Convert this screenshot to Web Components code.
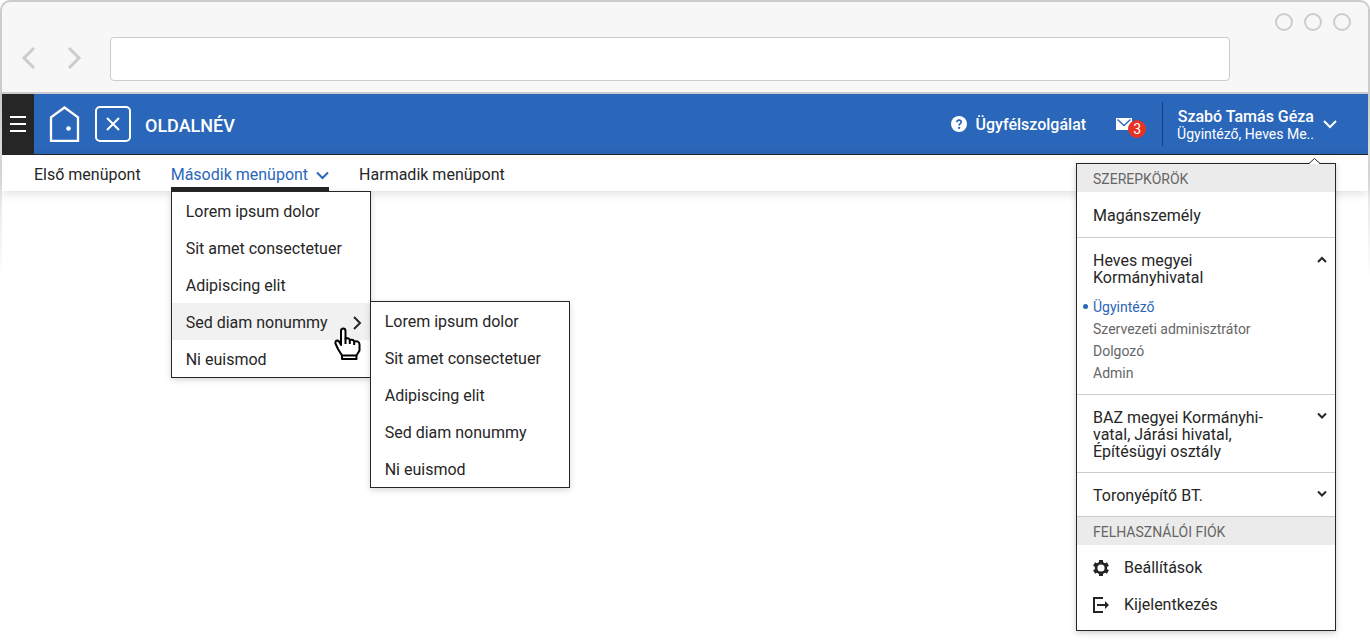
<!DOCTYPE html>
<html lang="hu">
<head>
<meta charset="utf-8">
<title>Oldalnév</title>
<style>
html, body { margin: 0; background: #fff; }
body { font: 16px/20px Roboto, "Liberation Sans", sans-serif; color: #262626; }
</style>
</head>
<body>
<browser-window>
  <app-header page-title="OLDALNÉV">
    <user-menu user-name="Szabó Tamás Géza" user-role="Ügyintéző, Heves Me.."></user-menu>
  </app-header>
  <nav-bar>
    <nav-item label="Első menüpont"></nav-item>
    <nav-item label="Második menüpont" open>
      <menu-list>
        <menu-entry label="Lorem ipsum dolor"></menu-entry>
        <menu-entry label="Sit amet consectetuer"></menu-entry>
        <menu-entry label="Adipiscing elit"></menu-entry>
        <menu-entry label="Sed diam nonummy" open>
          <menu-list>
            <menu-entry label="Lorem ipsum dolor"></menu-entry>
            <menu-entry label="Sit amet consectetuer"></menu-entry>
            <menu-entry label="Adipiscing elit"></menu-entry>
            <menu-entry label="Sed diam nonummy"></menu-entry>
            <menu-entry label="Ni euismod"></menu-entry>
          </menu-list>
        </menu-entry>
        <menu-entry label="Ni euismod"></menu-entry>
      </menu-list>
    </nav-item>
    <nav-item label="Harmadik menüpont"></nav-item>
  </nav-bar>
</browser-window>

<script>
const reset = `
  :host, *, *::before, *::after { box-sizing: border-box; }
  button { font: inherit; color: inherit; background: none; border: 0; padding: 0; margin: 0; cursor: pointer; text-align: left; }
  a { color: inherit; text-decoration: none; }
  svg { display: block; fill: none; flex: none; }
  ul { list-style: none; margin: 0; padding: 0; }
`;

class Base extends HTMLElement {
  constructor() {
    super();
    this.attachShadow({ mode: "open" });
  }
  connectedCallback() {
    this.shadowRoot.innerHTML = `<style>${reset}${this.styles()}</style>${this.markup()}`;
  }
  text(name) { return this.getAttribute(name) || ""; }
}

customElements.define("browser-window", class extends Base {
  styles() { return `
    :host { display: flex; flex-direction: column; min-height: 100vh; }
    .chrome { display: flex; flex-direction: column; height: 94px; background: #f7f7f7; border: 2px solid #ccc; border-radius: 10px 10px 0 0; border-bottom-color: #ccc; }
    .dots { display: flex; justify-content: flex-end; gap: 11px; padding: 11px 17px 0 0; }
    .dots i { width: 18px; height: 18px; border: 2px solid #ccc; border-radius: 50%; }
    .bar { display: flex; align-items: center; padding: 6px 138px 0 18px; }
    .bar button { padding-bottom: 2px; }
    .bar button + button { margin-left: 28px; }
    .bar input { flex: 1; min-width: 0; height: 44px; margin-left: 26px; border: 1px solid #ccc; border-radius: 4px; background: #fff; padding: 0 12px; font: inherit; }
    .page { flex: 1; padding: 0 2px; background: linear-gradient(#ccc, #fff) left top / 2px 186px no-repeat, linear-gradient(#ccc, #fff) right top / 2px 186px no-repeat; }
  `; }
  markup() { return `
    <div class="chrome">
      <div class="dots"><i></i><i></i><i></i></div>
      <div class="bar">
        <button aria-label="Vissza"><svg width="18" height="24" stroke="#ccc" stroke-width="3"><path d="M14 2 4 12l10 10"/></svg></button>
        <button aria-label="Előre"><svg width="18" height="24" stroke="#ccc" stroke-width="3"><path d="M3 2l10 10L3 22"/></svg></button>
        <input type="text" aria-label="Cím">
      </div>
    </div>
    <div class="page"><slot></slot></div>`; }
});

customElements.define("app-header", class extends Base {
  styles() { return `
    :host { display: flex; align-items: center; height: 61px; background: #2a66ba; border-bottom: 1px solid #262626; color: #fff; }
    .burger { display: grid; place-items: center; align-self: stretch; width: 32px; background: #262626; }
    .home { margin-left: 15px; }
    .close { display: grid; place-items: center; width: 36px; height: 36px; margin-left: 15px; border: 2px solid #fff; border-radius: 5px; }
    .title { margin: 4px 0 0 14px; font-size: 18px; line-height: 20px; font-weight: 500; }
    .help { display: flex; align-items: center; gap: 8px; margin-left: auto; font-weight: 500; }
    .help span { padding-top: 2px; }
    .mail { position: relative; margin-left: 30px; }
    .badge { position: absolute; left: 12px; top: 2px; width: 18px; height: 18px; border-radius: 50%; background: #e63323; font-size: 14px; line-height: 18px; text-align: center; }
    .rule { width: 1px; height: 44px; margin: 0 14px 0 30px; background: #0c4382; }
  `; }
  markup() { return `
    <button class="burger" aria-label="Menü"><svg width="16" height="16" stroke="#fff" stroke-width="2"><path d="M0 1h16M0 8h16M0 15h16"/></svg></button>
    <a class="home" href="#" aria-label="Kezdőlap"><svg width="31" height="36" stroke="#fff" stroke-width="2.300"><path d="M2 34.800V11.300L15.500 1.500 29 11.300V34.800z"/><circle cx="19.500" cy="22.500" r="2.300" fill="#fff" stroke="none"/></svg></a>
    <button class="close" aria-label="Bezárás"><svg width="14" height="14" stroke="#fff" stroke-width="2"><path d="M1 1l12 12M13 1 1 13"/></svg></button>
    <h1 class="title">${this.text("page-title")}</h1>
    <a class="help" href="#"><svg width="16" height="16"><circle cx="8" cy="8" r="8" fill="#fff"/><path d="M5.900 6.200C5.900 3.300 10.200 3.400 10.200 6c0 1.600-2.100 1.700-2.100 3.500" stroke="#2a66ba" stroke-width="1.700"/><circle cx="8.100" cy="11.900" r="1.100" fill="#2a66ba"/></svg><span>Ügyfélszolgálat</span></a>
    <a class="mail" href="#" aria-label="Üzenetek"><svg width="16" height="12"><path d="M0 0h16v12H0z" fill="#fff"/><path d="M1.500 1.500 8 7.500l6.500-6" stroke="#2a66ba" stroke-width="1.300"/></svg><span class="badge">3</span></a>
    <span class="rule"></span>
    <slot></slot>`; }
});

customElements.define("user-menu", class extends Base {
  styles() { return `
    :host { display: block; position: relative; margin-right: 30px; color: #fff; }
    .who { display: flex; align-items: center; gap: 8px; }
    .names { display: flex; flex-direction: column; align-items: flex-end; padding-top: 2px; }
    .name { font-weight: 500; line-height: 18px; }
    .role { font-size: 14px; line-height: 16px; }
    .panel { position: absolute; z-index: 3; right: 2px; top: 57px; width: 260px; background: #fff; color: #262626; border: 1px solid #262626; box-shadow: 0 2px 6px rgba(0,0,0,.2); }
    .tip { position: absolute; right: 14px; top: -7px; }
    h2 { margin: 0; padding: 1px 16px 0; height: 28px; background: #ebebeb; color: #666; font-size: 14px; line-height: 28px; font-weight: 400; }
    .section { border-bottom: 1px solid #ccc; padding: 14px 8px 12px 16px; line-height: 17px; }
    .section.single { padding: 15px 8px 13px 16px; }
    .toggle { display: flex; justify-content: space-between; align-items: flex-start; width: 100%; line-height: 17px; }
    .toggle span { width: 180px; }
    .toggle svg { margin-top: 3px; }
    .roles { display: grid; gap: 4px; margin-top: 12px; font-size: 14px; line-height: 18px; color: #666; }
    .roles li { position: relative; }
    .roles .current { color: #2a66ba; }
    .current::before { content: ""; position: absolute; left: -10px; top: 6px; width: 5px; height: 5px; border-radius: 50%; background: #2a66ba; }
    .account { display: grid; gap: 17px; padding: 13px 16px 15px; }
    .account a { display: flex; align-items: center; gap: 15px; }
  `; }
  markup() {
    const down = `<svg width="10" height="8" stroke="#262626" stroke-width="2"><path d="M1 1.500l4 4 4-4"/></svg>`;
    const up = `<svg width="10" height="8" stroke="#262626" stroke-width="2"><path d="M1 7l4-4 4 4"/></svg>`;
    const teeth = [0, 60, 120].map(a => `<path d="M8 0v3.500M8 12.500V16" stroke="#262626" stroke-width="4" transform="rotate(${a} 8 8)"/>`).join("");
    return `
    <button class="who" aria-expanded="true">
      <span class="names"><span class="name">${this.text("user-name")}</span><span class="role">${this.text("user-role")}</span></span>
      <svg width="16" height="10" stroke="#fff" stroke-width="2"><path d="M2 2l6 6 6-6"/></svg>
    </button>
    <div class="panel">
      <svg class="tip" width="13" height="7"><path d="M1 7l5.500-5.500L12 7z" fill="#fff"/><path d="M1 6.500l5.500-5 5.500 5" stroke="#262626"/></svg>
      <h2>SZEREPKÖRÖK</h2>
      <div class="section single"><a href="#">Magánszemély</a></div>
      <div class="section">
        <button class="toggle" aria-expanded="true"><span>Heves megyei Kormányhivatal</span>${up}</button>
        <ul class="roles">
          <li class="current"><a href="#">Ügyintéző</a></li>
          <li><a href="#">Szervezeti adminisztrátor</a></li>
          <li><a href="#">Dolgozó</a></li>
          <li><a href="#">Admin</a></li>
        </ul>
      </div>
      <div class="section"><button class="toggle" aria-expanded="false"><span>BAZ megyei Kormányhi-vatal, Járási hivatal, Építésügyi osztály</span>${down}</button></div>
      <div class="section"><button class="toggle" aria-expanded="false"><span>Toronyépítő BT.</span>${down}</button></div>
      <h2>FELHASZNÁLÓI FIÓK</h2>
      <div class="account">
        <a href="#"><svg width="16" height="16">${teeth}<circle cx="8" cy="8" r="4.900" stroke="#262626" stroke-width="2.600"/></svg>Beállítások</a>
        <a href="#"><svg width="16" height="16"><path d="M10 1H1v14h9M4 8h9" stroke="#262626" stroke-width="2"/><path d="M12 4l4 4-4 4z" fill="#262626"/></svg>Kijelentkezés</a>
      </div>
    </div>`;
  }
});

customElements.define("nav-bar", class extends Base {
  styles() { return `
    :host { display: block; }
    nav { display: flex; gap: 30px; height: 36px; padding-left: 32px; background: #fff; box-shadow: 0 2px 10px rgba(0,0,0,.14); }
  `; }
  markup() { return `<nav><slot></slot></nav>`; }
});

customElements.define("nav-item", class extends Base {
  styles() { return `
    :host { display: block; position: relative; }
    a { display: flex; align-items: center; gap: 8px; height: 36px; padding-top: 4px; }
    :host([open]) a { color: #2a66ba; border-bottom: 4px solid #262626; padding-top: 8px; }
    .drop { position: absolute; z-index: 2; left: 0; top: 36px; }
  `; }
  markup() {
    const arrow = this.hasAttribute("open") ? `<svg width="13" height="9" stroke="#2a66ba" stroke-width="2"><path d="M1 1.500l5.500 5.500L12 1.500"/></svg>` : "";
    return `<a href="#">${this.text("label")}${arrow}</a><div class="drop"><slot></slot></div>`;
  }
});

customElements.define("menu-list", class extends Base {
  styles() { return `
    :host { display: block; width: 200px; background: #fff; border: 1px solid #262626; box-shadow: 0 2px 6px rgba(0,0,0,.16); }
  `; }
  markup() { return `<slot></slot>`; }
});

customElements.define("menu-entry", class extends Base {
  styles() { return `
    :host { display: block; position: relative; }
    a { display: flex; align-items: center; justify-content: space-between; height: 37px; padding: 2px 7px 0 14px; color: #262626; }
    :host([open]) a { background: #f1f1f1; }
    .sub { position: absolute; z-index: 1; left: 198px; top: -2px; }
    .hand { position: absolute; z-index: 2; left: 162px; top: 24px; }
  `; }
  markup() {
    const open = this.hasAttribute("open");
    const arrow = open ? `<svg width="10" height="14" stroke="#262626" stroke-width="2"><path d="M1 1l6 6-6 6"/></svg>` : "";
    const hand = open ? `<svg class="hand" width="28" height="34" stroke="#000" stroke-width="2" stroke-linejoin="round"><path fill="#fff" d="M7 18V4q0-2.500 2.200-2.500T11.500 4v7.500q3.500-1 4.300 1.500 3.500-1 4.300 1.500 5.400-1 5.400 3v6l-3 5V32H8v-3.500L4 22 1.500 16.500Q1 13.500 3.500 13.500 5.500 14 7 18z"/><path d="M11.500 11v6M15.800 12.500V17M20.200 14v4M8 28.500h14.500"/></svg>` : "";
    return `<a href="#">${this.text("label")}${arrow}</a><div class="sub"><slot></slot></div>${hand}`;
  }
});
</script>
</body>
</html>
